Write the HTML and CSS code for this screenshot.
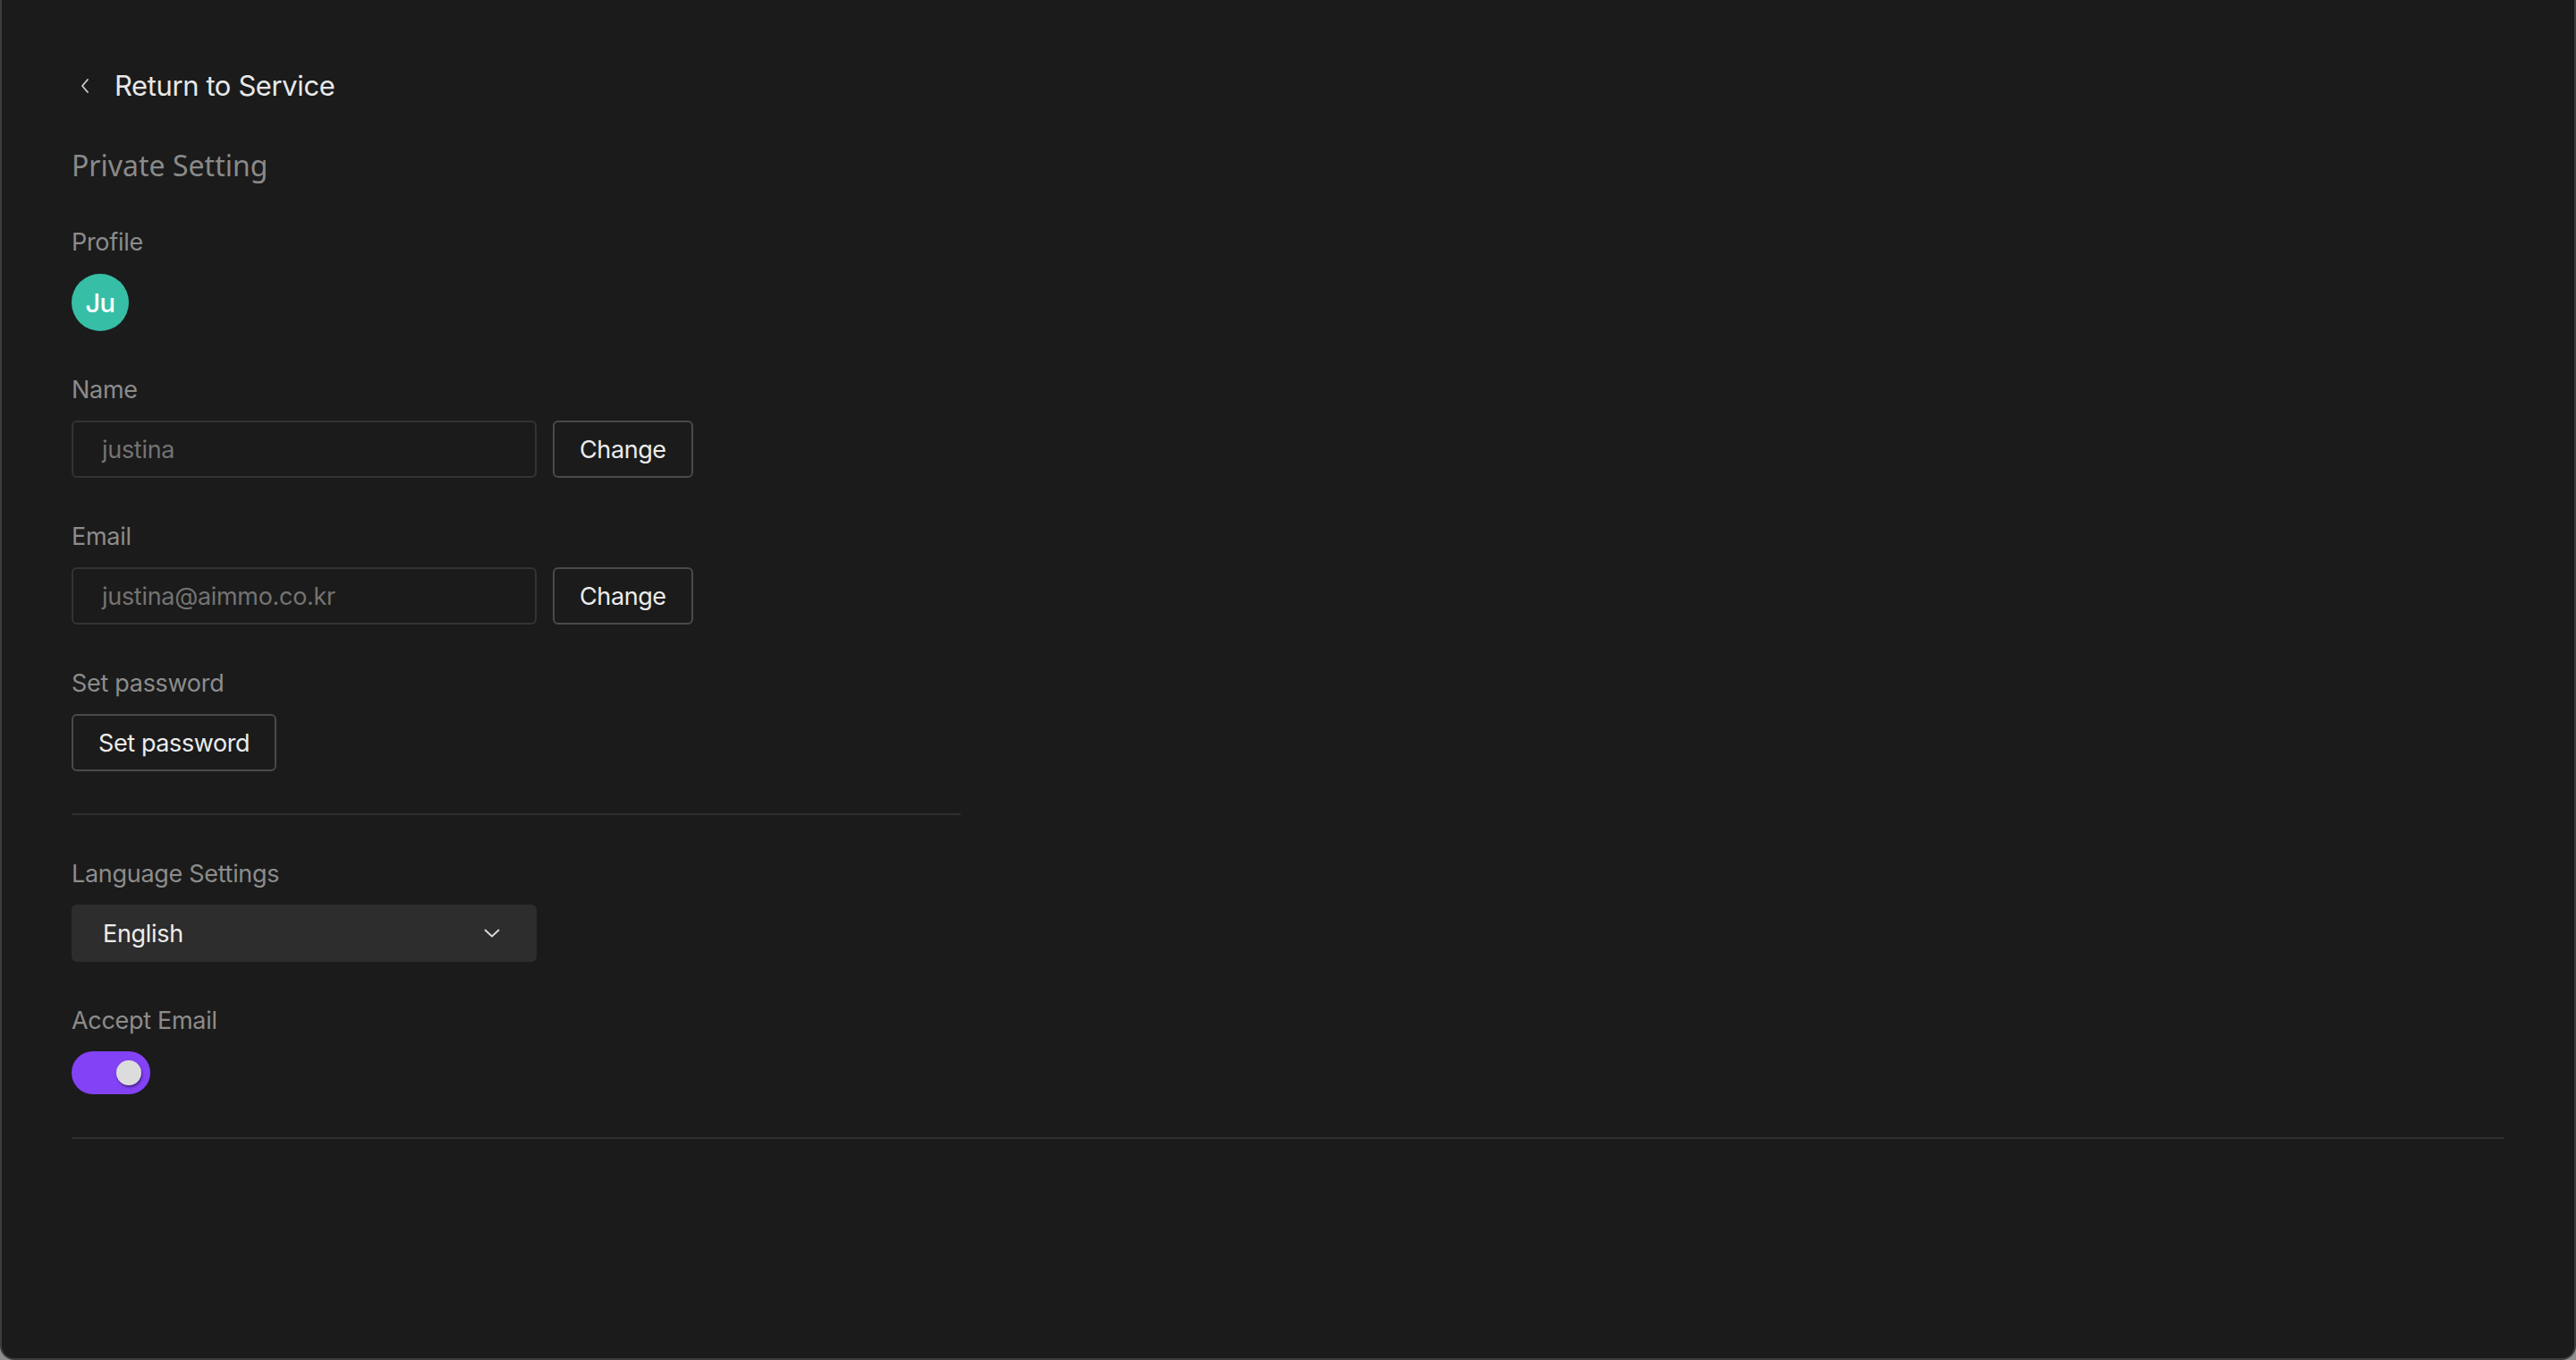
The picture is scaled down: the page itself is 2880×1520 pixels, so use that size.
FILE: index.html
```html
<!DOCTYPE html>
<html lang="en">
<head>
<meta charset="utf-8">
<title>Private Setting</title>
<link rel="stylesheet" href="styles.css">
</head>
<body>
<div class="window">
  <main class="page">
    <a class="back" href="#">
      <svg class="back-icon" width="10" height="16" viewBox="0 0 10 16"><polyline points="8,1 2,8 8,15" fill="none" stroke="#cfcfcf" stroke-width="1.8" stroke-linecap="round" stroke-linejoin="round"/></svg>
      <span>Return to Service</span>
    </a>
    <h1 class="title">Private Setting</h1>

    <section class="field field-profile">
      <div class="label">Profile</div>
      <div class="avatar">Ju</div>
    </section>

    <section class="field">
      <div class="label">Name</div>
      <div class="row">
        <div class="input">justina</div>
        <button class="btn">Change</button>
      </div>
    </section>

    <section class="field">
      <div class="label">Email</div>
      <div class="row">
        <div class="input">justina@aimmo.co.kr</div>
        <button class="btn">Change</button>
      </div>
    </section>

    <section class="field">
      <div class="label">Set password</div>
      <div class="row">
        <button class="btn">Set password</button>
      </div>
    </section>

    <hr class="divider divider-short">

    <section class="field">
      <div class="label">Language Settings</div>
      <div class="select">
        <span>English</span>
        <svg width="18" height="10" viewBox="0 0 18 10"><polyline points="1.5,1.5 9,8.5 16.5,1.5" fill="none" stroke="#dcdcdc" stroke-width="1.8" stroke-linecap="round" stroke-linejoin="round"/></svg>
      </div>
    </section>

    <section class="field">
      <div class="label">Accept Email</div>
      <div class="toggle"><span class="knob"></span></div>
    </section>

    <hr class="divider divider-long">
  </main>
</div>
</body>
</html>
```

FILE: styles.css
```css
html, body {
  margin: 0;
  padding: 0;
  background: #8e8e8e;
}

body {
  font-family: Inter, "Noto Sans", "Liberation Sans", sans-serif;
  color: #e6e6e6;
}

.window {
  box-sizing: border-box;
  width: 2880px;
  height: 1520px;
  background: #1b1b1b;
  border-left: 2px solid #3c3c3c;
  border-right: 2px solid #3c3c3c;
  border-bottom: 2px solid #3c3c3c;
  border-radius: 0 0 16px 16px;
  overflow: hidden;
}

.page {
  padding: 76px 78px 0 78px;
  display: flex;
  flex-direction: column;
  align-items: flex-start;
}

.back {
  display: flex;
  align-items: center;
  height: 40px;
  color: #e8e8e8;
  text-decoration: none;
  font-size: 31px;
  letter-spacing: -0.4px;
  line-height: 40px;
  padding-left: 10px;
}

.back-icon {
  margin-right: 28px;
}

.title {
  margin: 45px 0 0 0;
  font-family: "Noto Sans", Inter, sans-serif;
  font-weight: 400;
  font-size: 32px;
  line-height: 48px;
  color: #8a8a8a;
}

.field {
  display: flex;
  flex-direction: column;
  align-items: flex-start;
  gap: 14px;
  margin-top: 46px;
}

.field-profile {
  margin-top: 42px;
  gap: 15px;
}

.label {
  font-size: 27px;
  letter-spacing: -0.3px;
  line-height: 40px;
  color: #8c8c8c;
}

.avatar {
  width: 64px;
  height: 64px;
  border-radius: 50%;
  background: #36bfa6;
  color: #ffffff;
  font-size: 29px;
  font-weight: 500;
  display: flex;
  align-items: center;
  justify-content: center;
  letter-spacing: -0.5px;
}

.row {
  display: flex;
  gap: 18px;
}

.input {
  box-sizing: border-box;
  width: 520px;
  height: 64px;
  border: 2px solid #333333;
  border-radius: 6px;
  padding: 0 32px;
  display: flex;
  align-items: center;
  font-size: 27px;
  letter-spacing: -0.3px;
  color: #737373;
  background: #1b1b1b;
}

.btn {
  box-sizing: border-box;
  height: 64px;
  padding: 0 28px;
  border: 2px solid #4a4a4a;
  border-radius: 6px;
  background: #1b1b1b;
  color: #ececec;
  font-family: Inter, "Liberation Sans", sans-serif;
  font-size: 27px;
  letter-spacing: -0.4px;
}

.divider {
  border: 0;
  height: 2px;
  background: #2f2f2f;
  margin: 0;
}

.divider-short {
  width: 994px;
  margin-top: 47px;
  margin-bottom: 0;
}

.divider-long {
  width: 2720px;
  margin-top: 48px;
}

.select {
  box-sizing: border-box;
  width: 520px;
  height: 64px;
  border-radius: 6px;
  background: #2d2d2d;
  padding: 0 41px 0 35px;
  display: flex;
  align-items: center;
  justify-content: space-between;
  font-size: 27px;
  letter-spacing: -0.3px;
  color: #ececec;
}

.toggle {
  box-sizing: border-box;
  width: 88px;
  height: 48px;
  border-radius: 24px;
  background: #8442f6;
  padding: 10px;
  display: flex;
  justify-content: flex-end;
}

.knob {
  width: 28px;
  height: 28px;
  border-radius: 50%;
  background: #dcdcdc;
  box-shadow: 1px 2px 3px rgba(0, 0, 0, 0.45);
}
```
